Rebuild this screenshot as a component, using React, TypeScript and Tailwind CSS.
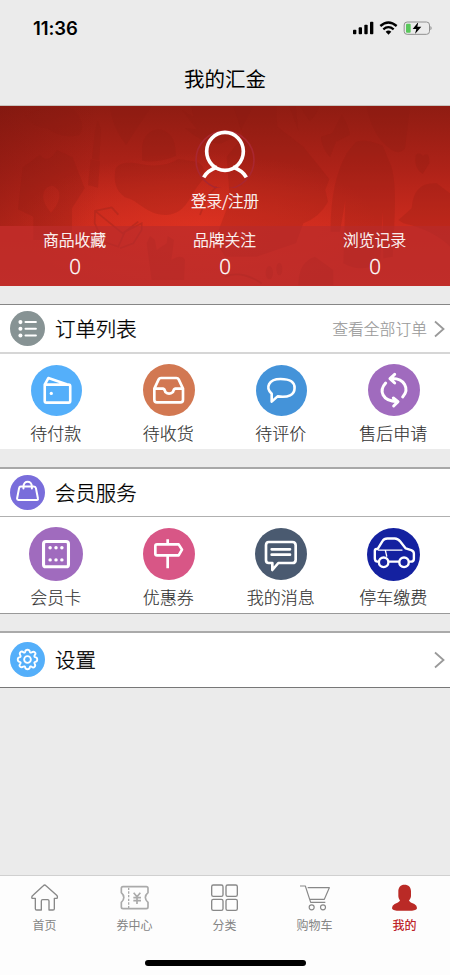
import React from "react";

const stats = [
  { label: "商品收藏", value: 0 },
  { label: "品牌关注", value: 0 },
  { label: "浏览记录", value: 0 },
];

function StatusBar() {
  return (
    <div className="flex h-[54px] items-center justify-between pl-[33px] pr-[17px] pt-[2px]">
      <span className="font-['Inter'] text-[18.500px] font-semibold leading-none tracking-[-0.1px] text-black">11:36</span>
      <svg width="80" height="14" viewBox="0 0 240 42">
        {/* Signal */}
        <rect x="0" y="26" width="10" height="14" rx="2.5" />
        <rect x="17" y="19" width="10" height="21" rx="2.5" />
        <rect x="34" y="11" width="10" height="29" rx="2.5" />
        <rect x="51" y="2" width="10" height="38" rx="2.5" />
        {/* Wifi */}
        <g fill="none" stroke="#000" strokeWidth="7">
          <path d="M82 15Q106-6 131 15" />
          <path d="M91 25Q106 12 122 25" />
        </g>
        <path d="M98 32Q106 25 115 32L106.500 41Z" />
        {/* Battery */}
        <rect x="153.500" y="3" width="76" height="37" rx="9" fill="none" stroke="#909090" strokeWidth="3" />
        <path d="M233 16Q238 21 233 27Z" fill="#888" stroke="#888" />
        <rect x="159" y="8" width="14" height="27" rx="3" fill="#59c75b" />
        <path d="M196 3L179 24H190L186 39L205 17H193Z" stroke="#ebebeb" strokeWidth="3" paintOrder="stroke" />
      </svg>
    </div>
  );
}

function BannerArt() {
  return (
    <svg className="absolute inset-0 h-full w-full" viewBox="0 18 1350 540" preserveAspectRatio="none">
      <defs>
        <linearGradient id="base" x1="0" y1="0" x2="0" y2="1">
          <stop offset="0" stopColor="#8f1c12" />
          <stop offset="0.35" stopColor="#ae2218" />
          <stop offset="0.67" stopColor="#cc2b1e" />
          <stop offset="1" stopColor="#cf3024" />
        </linearGradient>
        <radialGradient id="glow" cx="0.44" cy="0.66" r="0.4">
          <stop offset="0" stopColor="#e63522" stopOpacity="0.6" />
          <stop offset="1" stopColor="#e63522" stopOpacity="0" />
        </radialGradient>
        <linearGradient id="edge" x1="0" y1="0" x2="1" y2="0">
          <stop offset="0" stopColor="#6f120c" stopOpacity="0.35" />
          <stop offset="0.22" stopColor="#6f120c" stopOpacity="0" />
        </linearGradient>
      </defs>
      <rect y="18" width="1350" height="540" fill="url(#base)" />
      <rect y="18" width="1350" height="540" fill="url(#glow)" />
      <rect y="18" width="1350" height="360" fill="url(#edge)" />
      <g fill="#8a1a14" fillOpacity="0.22">
        {/* Bag, shirt and lipstick */}
        <path d="M76 48Q120 15 220 28Q262 72 238 105Q185 118 145 86Q100 83 76 48Z" />
        <path fillRule="evenodd" d="M68 202L120 164Q145 195 170 150L218 172L254 265L216 325V420H100V350L54 328ZM135 268Q118 300 153 338Q186 300 176 272Q155 245 135 268Z" />
        <path d="M293 62L303 86L298 182L276 176L285 90ZM272 178L300 184L294 263L264 255Z" />
        {/* Hat */}
        <path d="M330 18H455L378 135Q335 80 330 18Z" />
        <path d="M426 182V145C430 70 520 70 526 145L528 168Q475 190 426 182Z" />
        <path d="M347 205Q365 180 424 193Q490 205 535 177L590 185Q625 205 610 238C565 285 565 340 500 345C440 347 415 300 375 292Q335 265 347 205Z" />
        {/* Glove and heel */}
        <path d="M546 30L580 50L574 18H760L715 105L665 130Q610 135 555 85L590 88Z" />
        <path d="M700 18H828L832 80L910 140L988 237L976 270L984 305Q960 350 910 370L888 430L770 470L675 470L645 420L690 300L680 170L730 110Z" />
        <path d="M868 18L895 92L887 18ZM900 18H958Q945 55 928 62Z" />
        {/* Bow */}
        <path d="M963 110L996 100L1025 44Q1042 65 1050 104L1008 125L990 172Q965 145 963 110Z" />
        {/* Coat */}
        <path d="M1068 125Q1100 115 1148 137L1170 190Q1190 230 1183 370L1178 470L1150 475L1148 330L1140 490Q1080 520 1030 490L1036 300L1020 395H992Q990 250 1040 160Z" />
        <path d="M1100 18H1230L1215 145Q1200 165 1175 150Q1115 110 1100 18Z" />
        <path d="M1247 165Q1260 155 1268 168Q1290 150 1288 190L1268 222Q1240 205 1247 165Z" />
        <path d="M1195 360L1235 325Q1240 245 1310 250L1350 280V440Q1300 390 1210 370Z" />
        <path d="M440 430L450 408L465 420L470 450L500 430L503 408L522 420L514 480Q545 460 555 480L552 540H455ZM895 556Q895 485 945 470L1000 510V556Z" />
        <ellipse cx="808" cy="518" rx="11" ry="20" />
        <ellipse cx="838" cy="507" rx="9" ry="19" />
      </g>
      {/* Glasses */}
      <g fill="none" stroke="#a6251b" strokeOpacity="0.5" strokeWidth="5">
        <path d="M355 344L335 322L285 333L284 370L310 425L355 440L375 395L425 370V390L400 430L360 445M287 334L368 400L415 365" />
        <path d="M600 345L620 290L650 260M675 530Q725 510 785 550" />
      </g>
    </svg>
  );
}

function Banner() {
  return (
    <section className="relative h-[180px] overflow-hidden bg-[#b3231a] text-white">
      <BannerArt />
      <div className="relative flex h-[120px] flex-col items-center pt-[20px]">
        <svg width="62" height="62" viewBox="0 0 186 186" fill="none">
          <circle cx="93" cy="102" r="87" stroke="#a92730" strokeWidth="5" />
          <ellipse cx="93" cy="76" rx="55" ry="57" stroke="#fff" strokeWidth="11" />
          <path d="M69 123Q40 134 29 154M117 123Q146 134 157 154" stroke="#fff" strokeWidth="11" />
        </svg>
        <span className="mt-[2px] text-[15.500px] font-light leading-[20px] [-webkit-text-stroke:0.25px_#fff]">登录/注册</span>
      </div>
      <div className="relative grid h-[60px] grid-cols-3 bg-[#b52b2d]/60 pt-[3px] text-center">
        {stats.map((item) => (
          <div key={item.label} className="flex flex-col items-center">
            <span className="mr-px text-[15.800px] font-light leading-[22px] [-webkit-text-stroke:0.25px_#fff]">{item.label}</span>
            <span className="pt-[4px] font-['Open_Sans'] text-[20.500px] font-light leading-[22px] [-webkit-text-stroke:0.35px_#fff]">{item.value}</span>
          </div>
        ))}
      </div>
    </section>
  );
}

const ListIcon = () => (
  <svg width="35" height="35" viewBox="0 0 104 104">
    <circle cx="52" cy="52" r="52" fill="#879394" />
    <g fill="#fff">
      <circle cx="31" cy="33" r="6" />
      <circle cx="31" cy="53" r="6" />
      <circle cx="31" cy="73" r="6" />
    </g>
    <path d="M46 33H77M46 53H77M46 73H77" stroke="#fff" strokeWidth="6" strokeLinecap="round" />
  </svg>
);

const BagIcon = () => (
  <svg width="35" height="35" viewBox="0 0 104 104" fill="none" stroke="#fff" strokeWidth="6" strokeLinejoin="round" strokeLinecap="round">
    <circle cx="52" cy="52" r="52" fill="#796ddb" stroke="none" />
    <path d="M32 34Q28 34 27 39L21 70Q21 74 25 74H80Q84 74 83 70L77 39Q76 34 71 34ZM40 40V34C40 15 65 15 65 34V40" />
  </svg>
);

const GearIcon = () => (
  <svg width="35" height="35" viewBox="0 0 104 104" fill="none" stroke="#fff" strokeWidth="5.500" strokeLinejoin="round">
    <circle cx="52" cy="52" r="52" fill="#54affa" stroke="none" />
    <path d="M45 29Q46 23 52 23T59 29Q60 33 64 31Q70 27 74 31T73 40Q71 44 75 45Q81 46 81 52T75 59Q71 60 73 64Q77 70 73 74T64 73Q60 71 59 75Q58 81 52 81T45 75Q44 71 40 73Q34 77 30 73T31 64Q33 60 29 59Q23 58 23 52T29 45Q33 44 31 40Q27 34 31 30T40 31Q44 33 45 29Z" />
    <circle cx="52" cy="52" r="10" />
  </svg>
);

const Chevron = () => (
  <svg width="11" height="18" viewBox="0 0 11 18" fill="none" stroke="#999" strokeWidth="1.800">
    <path d="M1 1.500L9.500 9L1 16.500" />
  </svg>
);

type RoundProps = { color: string; size: number; children: React.ReactNode };

// Drawn on a 156 unit grid, the disc fills the whole box
function Round({ color, size, children }: RoundProps) {
  return (
    <svg width={size} height={size} viewBox="0 0 156 156" fill="none" stroke="#fff" strokeWidth="8" strokeLinecap="round" strokeLinejoin="round">
      <circle cx="78" cy="78" r="78" fill={color} stroke="none" />
      {children}
    </svg>
  );
}

const orders = [
  {
    label: "待付款",
    icon: (
      <Round color="#54affa" size={51}>
        <path d="M42 60H115Q120 60 120 65V110Q120 115 115 115H47Q42 115 42 110ZM42 60L53 40L109 59" />
        <circle cx="62" cy="87" r="5" fill="#fff" stroke="none" />
      </Round>
    ),
  },
  {
    label: "待收货",
    icon: (
      <Round color="#d27852" size={52}>
        <path d="M34 74V107Q34 115 42 115H112Q120 115 120 107V74L107 46Q105 42 100 42H54Q49 42 47 46ZM36 74H60Q65 75 67 84Q78 94 90 84Q92 75 97 74H118" />
      </Round>
    ),
  },
  {
    label: "待评价",
    icon: (
      <Round color="#4493d9" size={51}>
        <path d="M48 112V88C28 70 38 43 75 43C108 43 118 53 118 70C118 91 99 101 66 96Z" />
      </Round>
    ),
  },
  {
    label: "售后申请",
    icon: (
      <Round color="#a06bbe" size={52}>
        <path d="M53 57C32 80 42 111 88 113M76 102L90 113L77 126M104 99C125 76 111 41 67 44M80 31L66 44L80 57" strokeWidth="9" />
      </Round>
    ),
  },
];

const services = [
  {
    label: "会员卡",
    icon: (
      <Round color="#a06bbe" size={54}>
        <rect x="42" y="42" width="72" height="73" rx="7" strokeWidth="9" />
        <g fill="#fff" stroke="none">
          <circle cx="61" cy="60" r="5" />
          <circle cx="78" cy="60" r="5" />
          <circle cx="95" cy="60" r="5" />
          <circle cx="61" cy="95" r="5" />
          <circle cx="78" cy="95" r="5" />
          <circle cx="95" cy="95" r="5" />
        </g>
      </Round>
    ),
  },
  {
    label: "优惠券",
    icon: (
      <Round color="#d85686" size={52}>
        <path d="M42 49H107L117 65L107 82H42Q37 82 37 77V54Q37 49 42 49ZM74 38V48M74 84V117" strokeLinecap="square" />
      </Round>
    ),
  },
  {
    label: "我的消息",
    icon: (
      <Round color="#4a5a70" size={52}>
        <path d="M41 42H112Q122 42 122 52V95Q122 105 112 105H70L52 126V105H41Q33 105 33 96V52Q33 42 41 42Z" />
        <path d="M50 64H105M50 80H105" />
      </Round>
    ),
  },
  {
    label: "停车缴费",
    icon: (
      <Round color="#1421a0" size={53}>
        <g strokeWidth="7">
          <path d="M33 99H31Q23 99 23 89V67Q23 61 32 61L46 38Q50 31 60 31H82Q91 31 98 40L114 60L130 65Q138 68 138 75V91Q138 99 128 99H125M65 99H92" />
          <circle cx="49" cy="101" r="14" />
          <circle cx="109" cy="101" r="14" />
          <path d="M33 65H103M54 66L58 83" strokeWidth="4" />
        </g>
      </Round>
    ),
  },
];

function IconRow({ items, className }: { items: typeof orders; className: string }) {
  return (
    <div className={`grid grid-cols-4 bg-white ${className}`}>
      {items.map((item) => (
        <div key={item.label} className="flex flex-col items-center">
          <div className="flex h-[54px] items-center">{item.icon}</div>
          <span className="mr-px mt-[4px] text-[17px] font-light leading-[24px] text-[#333] [-webkit-text-stroke:0.15px_#333]">{item.label}</span>
        </div>
      ))}
    </div>
  );
}

const tabs = [
  {
    label: "首页",
    icon: <path d="M12 43Q10 37 15 34L46 5Q50 1 54 5L86 34Q90 38 87 43H79V74Q79 78 75 78H63V51Q63 47 59 47H44Q40 47 40 51V78H26Q22 78 22 74V43Z" />,
  },
  {
    label: "券中心",
    icon: (
      <g stroke="#aaa">
        <path d="M15 8H85Q90 8 90 13V26Q74 40 90 55V69Q90 74 85 74H15Q10 74 10 69V55Q25 40 10 26V13Q10 8 15 8Z" strokeWidth="5" />
        <path d="M32 11V72" strokeDasharray="7 4" />
        <path d="M47 26L57 38L67 26M57 38V60M46 41H69M46 50H69" strokeWidth="5" />
      </g>
    ),
  },
  {
    label: "分类",
    icon: (
      <>
        <rect x="11" y="3" width="34" height="34" rx="5" />
        <rect x="54" y="3" width="34" height="34" rx="5" />
        <rect x="11" y="46" width="34" height="33" rx="5" />
        <rect x="54" y="46" width="34" height="33" rx="5" />
      </>
    ),
  },
  {
    label: "购物车",
    icon: (
      <g strokeWidth="3.500">
        <path d="M6 6H22L38 55H82M29 11H94L79 46H36" />
        <circle cx="41" cy="70" r="7.500" />
        <circle cx="75" cy="70" r="7.500" />
      </g>
    ),
  },
  {
    label: "我的",
    active: true,
    icon: <path fill="#ba2a26" stroke="none" d="M49 2C62 2 69 10 69 22V37Q69 43 63 50Q66 55 79 60Q87 64 87 72Q87 79 72 80H26Q12 79 12 72Q12 64 20 60Q32 55 36 50Q31 44 31 37V22C31 10 38 2 49 2Z" />,
  },
];

function TabBar() {
  return (
    <nav className="flex h-[100px] flex-col border-t border-[#d0d0d0] bg-[#fdfdfd]">
      <div className="grid grid-cols-5 pt-[8px]">
        {tabs.map((tab) => (
          <div key={tab.label} className="flex flex-col items-center">
            <svg width="34" height="28" viewBox="0 0 102 84" fill="none" stroke="#888" strokeWidth="4" strokeLinejoin="round">
              {tab.icon}
            </svg>
            <span className={`mr-px mt-[4px] text-[12px] leading-[18px] ${tab.active ? "font-medium text-[#bd2529]" : "text-[#858585]"}`}>
              {tab.label}
            </span>
          </div>
        ))}
      </div>
      <div className="mx-auto mt-auto mb-[9px] h-[6px] w-[161px] rounded-full bg-black" />
    </nav>
  );
}

export default function App() {
  return (
    <div className="flex h-[975px] w-[450px] flex-col overflow-hidden bg-[#ebebeb] font-['Noto_Sans_CJK_SC',sans-serif]">
      <header className="h-[106px] border-b border-[#c9c3be]">
        <StatusBar />
        <h1 className="text-center text-[20.500px] font-normal leading-[48px] text-black">我的汇金</h1>
      </header>

      <Banner />

      {/* Orders */}
      <section className="mt-[18px] h-[145px] border-t border-[#868686] bg-white">
        <div className="flex h-[49px] items-center border-b-2 border-[#d6d6d6] pl-[10px] pr-[5px]">
          <ListIcon />
          <h2 className="ml-[10px] text-[20.400px] font-light leading-none text-black [-webkit-text-stroke:0.3px_#000]">订单列表</h2>
          <span className="ml-auto mr-[7px] text-[15.800px] font-light leading-none text-[#999] [-webkit-text-stroke:0.15px_#999]">查看全部订单</span>
          <Chevron />
        </div>
        <IconRow items={orders} className="pt-[9px]" />
      </section>

      {/* Member services */}
      <section className="mt-[18px] h-[147px] border-t-2 border-b border-t-[#a8a8a8] border-b-[#999] bg-white">
        <div className="flex h-[48px] items-center border-b border-[#b0b0b0] pl-[10px]">
          <BagIcon />
          <h2 className="ml-[10px] text-[20.400px] font-light leading-none text-black [-webkit-text-stroke:0.3px_#000]">会员服务</h2>
        </div>
        <IconRow items={services} className="pt-[10px]" />
      </section>

      {/* Settings */}
      <section className="mt-[17px] flex h-[57px] items-center border-t-2 border-b border-t-[#aaa] border-b-[#777] bg-white pb-px pl-[10px] pr-[5px]">
        <GearIcon />
        <h2 className="ml-[10px] mr-auto text-[20.400px] font-light leading-none text-black [-webkit-text-stroke:0.3px_#000]">设置</h2>
        <Chevron />
      </section>

      <div className="flex-1" />
      <TabBar />
    </div>
  );
}
